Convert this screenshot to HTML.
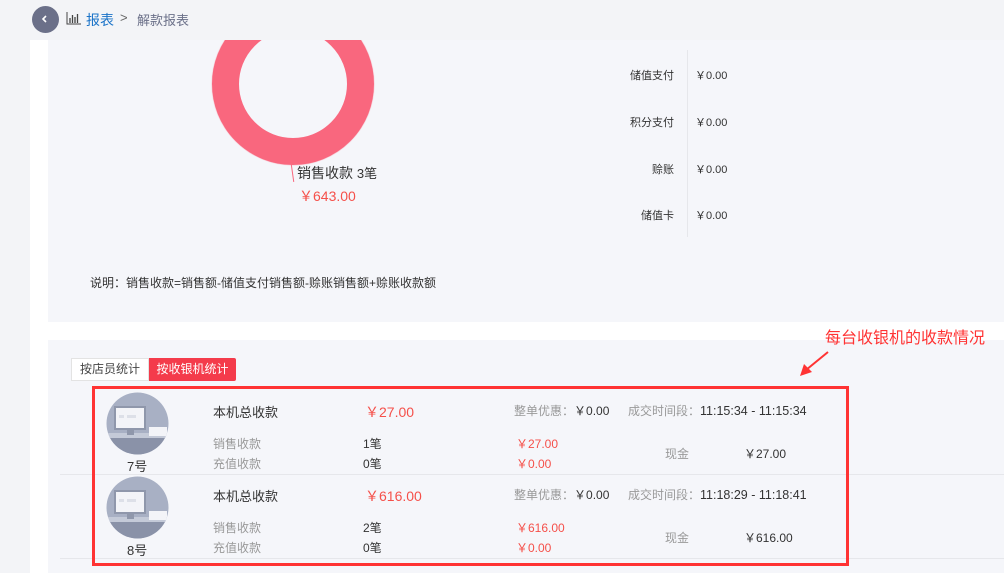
<!DOCTYPE html>
<html><head><meta charset="utf-8"><style>
*{margin:0;padding:0;box-sizing:border-box}
body{width:1004px;height:573px;position:relative;overflow:hidden;background:#f3f4f7;font-family:"Liberation Sans","Noto Sans CJK SC",sans-serif;color:#333}
.a{position:absolute;white-space:nowrap}
.g{color:#999}
.r{color:#f5504a}
.c{font-family:"Noto Sans CJK SC",sans-serif}
</style></head><body>
<div class="a" style="left:32px;top:6px;width:27px;height:27px;border-radius:50%;background:#6b7089"></div>
<svg class="a" style="left:40px;top:14px" width="10" height="10"><path d="M6 2 L3 5 L6 8" stroke="#fff" stroke-width="1.6" fill="none"/></svg>
<svg class="a" style="left:66px;top:11px" width="16" height="14"><path d="M1 1V13H15" stroke="#444" fill="none"/><path d="M4 12V7M6.5 12V4M9 12V6M11.5 12V3" stroke="#444" stroke-width="1.3"/></svg>
<div class="a" style="left:86px;top:10px;font-size:14px;color:#1a73c8">报表</div>
<div class="a" style="left:120px;top:10px;font-size:13px;color:#666">&gt;</div>
<div class="a" style="left:137px;top:10px;font-size:13px;color:#6b7089">解款报表</div>

<div class="a" style="left:30px;top:40px;width:18px;height:533px;background:#fff"></div>
<div class="a" style="left:48px;top:40px;width:956px;height:282px;background:#f5f6fa;overflow:hidden">
  <div class="a" style="left:164px;top:-37px;width:162px;height:162px;border-radius:50%;border:27px solid #f9677e;box-shadow:0 0 1px #f9677e"></div>
</div>
<div class="a" style="left:292px;top:164px;width:1px;height:18px;background:#f9677e;transform:rotate(-8deg)"></div>
<div class="a" style="left:297px;top:163px;font-size:14px;color:#333">销售收款 <span style="font-size:13px">3笔</span></div>
<div class="a r" style="left:299px;top:186px;font-size:14px">￥643.00</div>
<div class="a" style="left:687px;top:50px;width:1px;height:187px;background:#e6e7eb"></div>
<div class="a" style="left:600px;top:67px;width:74px;text-align:right;font-size:11px">储值支付</div>
<div class="a" style="left:600px;top:114px;width:74px;text-align:right;font-size:11px">积分支付</div>
<div class="a" style="left:600px;top:161px;width:74px;text-align:right;font-size:11px">赊账</div>
<div class="a" style="left:600px;top:207px;width:74px;text-align:right;font-size:11px">储值卡</div>
<div class="a" style="left:695px;top:67px;font-size:11px">￥0.00</div>
<div class="a" style="left:695px;top:114px;font-size:11px">￥0.00</div>
<div class="a" style="left:695px;top:161px;font-size:11px">￥0.00</div>
<div class="a" style="left:695px;top:207px;font-size:11px">￥0.00</div>
<div class="a" style="left:90px;top:274px;font-size:12px">说明<span class="c">：</span>销售收款=销售额-储值支付销售额-赊账销售额+赊账收款额</div>

<div class="a" style="left:48px;top:322px;width:956px;height:18px;background:#fff"></div>
<div class="a" style="left:48px;top:340px;width:956px;height:233px;background:#f5f6fa"></div>
<div class="a" style="left:825px;top:324px;font-size:16px;color:#f33">每台收银机的收款情况</div>
<svg class="a" style="left:796px;top:350px" width="36" height="30"><path d="M32 2 L10 20" stroke="#f33" stroke-width="2"/><path d="M4 26 L8 14 L16 22 Z" fill="#f33"/></svg>

<div class="a" style="left:71px;top:358px;width:78px;height:23px;background:#fff;border:1px solid #e3e3e3;font-size:12px;line-height:21px;text-align:center;color:#444">按店员统计</div>
<div class="a" style="left:149px;top:358px;width:87px;height:23px;background:#f43b4b;border-radius:0 2px 2px 0;font-size:12px;line-height:23px;text-align:center;color:#fff">按收银机统计</div>

<div class="a" style="left:60px;top:474px;width:944px;height:1px;background:#e6e7eb"></div>
<div class="a" style="left:60px;top:558px;width:944px;height:1px;background:#e6e7eb"></div>

<svg class="a" style="left:106px;top:392px" width="63" height="63"><defs><clipPath id="c1"><circle cx="31.5" cy="31.5" r="31"/></clipPath></defs><g clip-path="url(#c1)"><rect width="63" height="63" fill="#a8b0c4"/><rect y="45" width="63" height="18" fill="#8a92a8"/><rect y="41" width="63" height="5" fill="#c4cad8"/><rect x="8" y="14" width="32" height="24" fill="#8f97ab"/><rect x="10" y="16" width="28" height="20" fill="#f3f4f8"/><rect x="13" y="23" width="5" height="3" fill="#dde0e8"/><rect x="21" y="23" width="9" height="3" fill="#dde0e8"/><rect x="21" y="38" width="7" height="5" fill="#8f97ab"/><rect x="43" y="35" width="18" height="9" fill="#f3f4f8"/></g></svg>
<svg class="a" style="left:106px;top:476px" width="63" height="63"><defs><clipPath id="c2"><circle cx="31.5" cy="31.5" r="31"/></clipPath></defs><g clip-path="url(#c2)"><rect width="63" height="63" fill="#a8b0c4"/><rect y="45" width="63" height="18" fill="#8a92a8"/><rect y="41" width="63" height="5" fill="#c4cad8"/><rect x="8" y="14" width="32" height="24" fill="#8f97ab"/><rect x="10" y="16" width="28" height="20" fill="#f3f4f8"/><rect x="13" y="23" width="5" height="3" fill="#dde0e8"/><rect x="21" y="23" width="9" height="3" fill="#dde0e8"/><rect x="21" y="38" width="7" height="5" fill="#8f97ab"/><rect x="43" y="35" width="18" height="9" fill="#f3f4f8"/></g></svg>

<div class="a" style="left:127px;top:456px;font-size:13px">7号</div>
<div class="a" style="left:213px;top:402px;font-size:13px">本机总收款</div>
<div class="a r" style="left:365px;top:402px;font-size:14px">￥27.00</div>
<div class="a g" style="left:213px;top:435px;font-size:12px">销售收款</div>
<div class="a g" style="left:213px;top:455px;font-size:12px">充值收款</div>
<div class="a" style="left:363px;top:435px;font-size:12px">1笔</div>
<div class="a" style="left:363px;top:455px;font-size:12px">0笔</div>
<div class="a r" style="left:516px;top:435px;font-size:12px">￥27.00</div>
<div class="a r" style="left:516px;top:455px;font-size:12px">￥0.00</div>
<div class="a" style="left:514px;top:402px;font-size:12px"><span class="g">整单优惠<span class="c">：</span></span>￥0.00</div>
<div class="a" style="left:628px;top:402px;font-size:12px"><span class="g">成交时间段<span class="c">：</span></span><span style="font-size:12.5px">11:15:34 - 11:15:34</span></div>
<div class="a g" style="left:665px;top:445px;font-size:12px">现金</div>
<div class="a" style="left:744px;top:445px;font-size:12px">￥27.00</div>

<div class="a" style="left:127px;top:540px;font-size:13px">8号</div>
<div class="a" style="left:213px;top:486px;font-size:13px">本机总收款</div>
<div class="a r" style="left:365px;top:486px;font-size:14px">￥616.00</div>
<div class="a g" style="left:213px;top:519px;font-size:12px">销售收款</div>
<div class="a g" style="left:213px;top:539px;font-size:12px">充值收款</div>
<div class="a" style="left:363px;top:519px;font-size:12px">2笔</div>
<div class="a" style="left:363px;top:539px;font-size:12px">0笔</div>
<div class="a r" style="left:516px;top:519px;font-size:12px">￥616.00</div>
<div class="a r" style="left:516px;top:539px;font-size:12px">￥0.00</div>
<div class="a" style="left:514px;top:486px;font-size:12px"><span class="g">整单优惠<span class="c">：</span></span>￥0.00</div>
<div class="a" style="left:628px;top:486px;font-size:12px"><span class="g">成交时间段<span class="c">：</span></span><span style="font-size:12.5px">11:18:29 - 11:18:41</span></div>
<div class="a g" style="left:665px;top:529px;font-size:12px">现金</div>
<div class="a" style="left:744px;top:529px;font-size:12px">￥616.00</div>

<div class="a" style="left:92px;top:386px;width:757px;height:180px;border:3px solid #f33"></div>
</body></html>
